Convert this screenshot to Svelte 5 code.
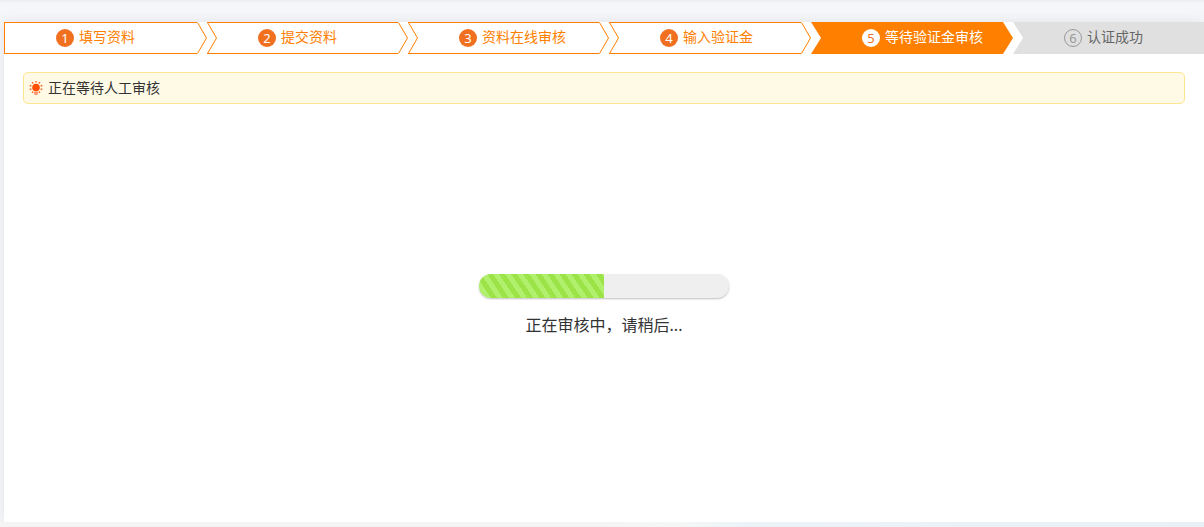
<script>
  const steps = [
    { label: '填写资料', state: 'done' },
    { label: '提交资料', state: 'done' },
    { label: '资料在线审核', state: 'done' },
    { label: '输入验证金', state: 'done' },
    { label: '等待验证金审核', state: 'current' },
    { label: '认证成功', state: 'todo' }
  ];
  const progress = 50;
  const rays = [0, 36, 72, 108, 144, 216, 252, 288, 324];
</script>

<div class="page">
  <main class="panel">
    <ol class="steps">
      {#each steps as step, i}
        <li class="step {step.state}" aria-current={step.state === 'current' ? 'step' : undefined}>
          {#if i > 0}
            <svg class="edge" viewBox="0 0 10 32" aria-hidden="true">
              {#if step.state === 'done'}
                <path class="cap" d="M0 0H10V1H0ZM0 31H10V32H0Z" />
                <path class="line" d="M.5 .5 9.5 16 .5 31.5" />
              {:else}
                <path class="fill" d="M0 0H10V32H0L10 16Z" />
              {/if}
            </svg>
          {/if}
          <div class="body" class:first={i === 0}>
            <span class="num">{i + 1}</span>
            <span class="label">{step.label}</span>
          </div>
          {#if i < steps.length - 1}
            <svg class="edge" viewBox="0 0 10 32" aria-hidden="true">
              {#if step.state === 'done'}
                <path class="line" d="M.5 .5 9.5 16 .5 31.5" />
              {:else}
                <path class="fill" d="M0 0 10 16 0 32Z" />
              {/if}
            </svg>
          {/if}
        </li>
      {/each}
    </ol>

    <div class="notice" role="status">
      <svg class="bulb" viewBox="0 0 14 14" aria-hidden="true">
        <circle cx="7" cy="6.5" r="3.8" fill="#ff5000" />
        {#each rays as angle}
          <path d="M7 -.1V1.6" stroke="#ff6a26" stroke-width="1.4" transform="rotate({angle} 7 6.5)" />
        {/each}
        <path d="M5 10.6H9V12.6L8.4 14H5.6L5 12.6Z" fill="#ff9a75" />
      </svg>
      <span class="label">正在等待人工审核</span>
    </div>

    <section class="waiting">
      <div class="track" role="progressbar" aria-label="审核进度" aria-valuenow={progress} aria-valuemin="0" aria-valuemax="100">
        <div class="bar" style="width: {progress}%"></div>
      </div>
      <p>正在审核中，请稍后...</p>
    </section>
  </main>
  <div class="strip"></div>
</div>

<style>
  :global(body) {
    margin: 0;
    background: #f4f6f9;
  }
  .page {
    box-sizing: border-box;
    min-height: 100vh;
    display: flex;
    flex-direction: column;
    padding-top: 20px;
    border-top: 2px solid #eceef0;
    overflow: hidden;
    font-family: 'Noto Sans', 'Noto Sans CJK SC', sans-serif;
    font-size: 14px;
    color: #333;
  }
  .panel {
    flex: 1;
    display: flex;
    flex-direction: column;
    margin-left: 4px;
    background: #fff;
    box-shadow: 0 0 12px rgba(0, 0, 0, 0.08);
  }
  .strip {
    position: relative;
    height: 5px;
    background: linear-gradient(90deg, #f4f4f4 50%, #f5f7f6 56%, #ecf3f7 62%, #ebeff6);
  }
  .steps {
    display: grid;
    grid-template-columns: 203fr 201fr 201fr 202fr 202fr 191fr;
    margin: 0;
    padding: 0;
    list-style: none;
    background: #fff;
  }
  .step {
    display: flex;
    height: 32px;
    color: #ff8000;
  }
  .edge {
    flex: none;
    width: 10px;
    height: 32px;
  }
  .line {
    fill: none;
    stroke: #ff8000;
    stroke-width: 1;
  }
  .cap,
  .fill {
    fill: #ff8000;
  }
  .body {
    box-sizing: border-box;
    flex: 1;
    min-width: 0;
    display: flex;
    align-items: center;
    gap: 5px;
    padding-left: 41px;
    border: solid #ff8000;
    border-width: 1px 0;
    line-height: 20px;
    white-space: nowrap;
  }
  .body.first {
    border-left-width: 1px;
    padding-left: 51px;
  }
  .label {
    padding-bottom: 2px;
  }
  .num {
    box-sizing: border-box;
    flex: none;
    width: 18px;
    height: 18px;
    border-radius: 50%;
    background: #f07020;
    color: #fff;
    font-size: 13px;
    line-height: 18px;
    text-align: center;
  }
  .current {
    color: #fff;
  }
  .current .body {
    background: #ff8000;
  }
  .current .num {
    background: #fff;
    color: #f07020;
  }
  .todo {
    color: #666;
  }
  .todo .fill {
    fill: #e0e0e0;
  }
  .todo .body {
    background: #e0e0e0;
    border-color: #e0e0e0;
  }
  .todo .num {
    background: none;
    border: 1px solid #999;
    color: #999;
    line-height: 16px;
  }
  .notice {
    display: flex;
    align-items: center;
    gap: 5px;
    height: 30px;
    margin: 18px 19px 0;
    padding: 0 5px;
    border: 1px solid #ffe58f;
    border-radius: 5px;
    background: #fffae6;
  }
  .bulb {
    width: 14px;
    height: 14px;
  }
  .waiting {
    display: flex;
    flex-direction: column;
    align-items: center;
    padding: 170px 0 24px;
  }
  .track {
    width: 250px;
    height: 24px;
    border-radius: 12px;
    background: #efefef;
    box-shadow: 0 1px 2px rgba(0, 0, 0, 0.25);
    overflow: hidden;
  }
  .bar {
    height: 100%;
    background: repeating-linear-gradient(56deg, #9be347 0 5px, #b0f06c 5px 10px);
  }
  p {
    margin: 15px 0 0;
    font-size: 16px;
    line-height: 24px;
  }
</style>
